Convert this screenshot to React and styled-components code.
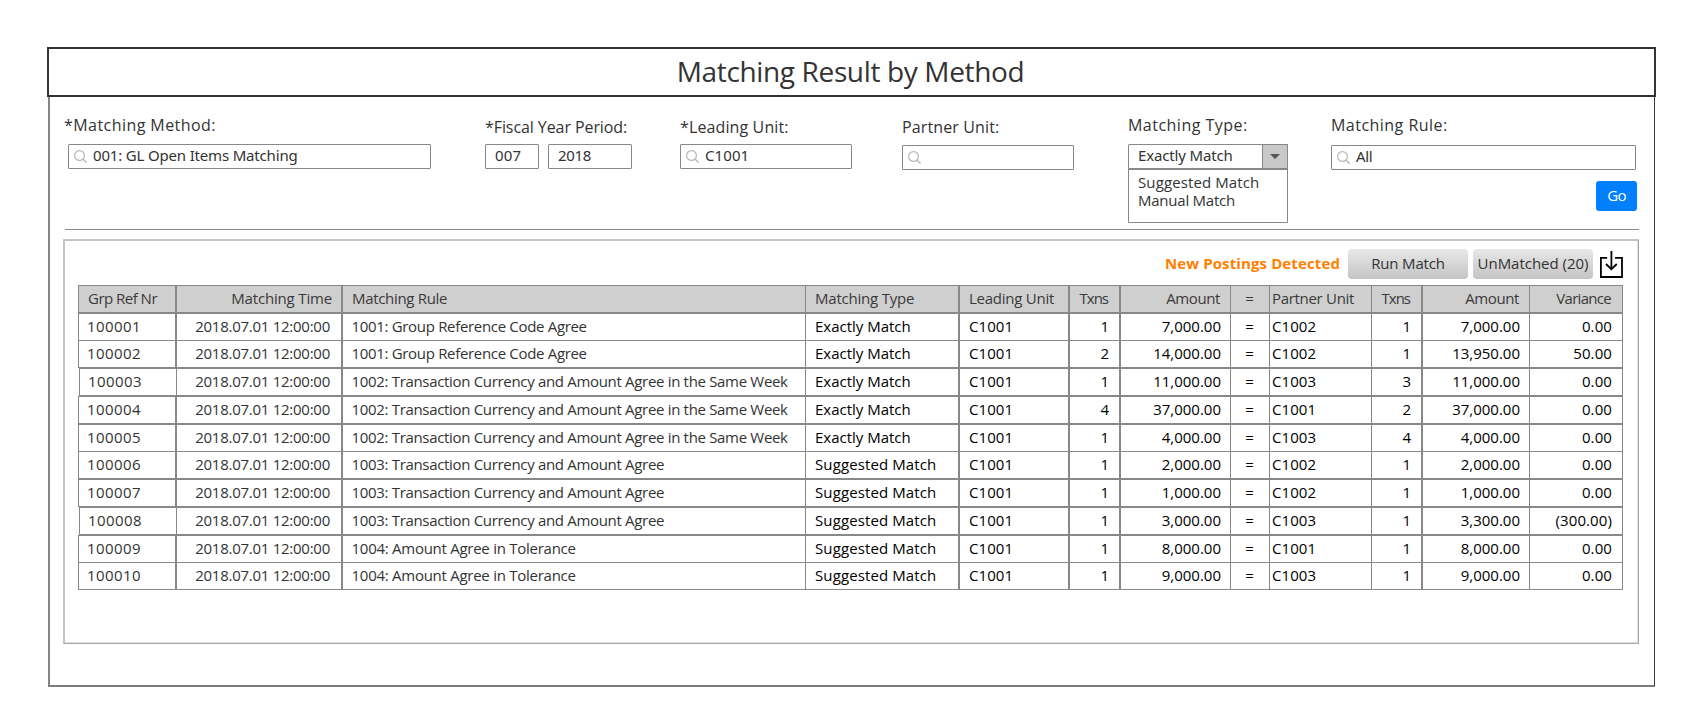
import React from 'react';
import styled, { createGlobalStyle, css } from 'styled-components';

const GlobalStyle = createGlobalStyle`
  * { box-sizing: border-box; }
  body {
    margin: 0;
    background: #fff;
    color: #333;
    font-family: 'Open Sans', 'Noto Sans', sans-serif;
    font-size: 15px;
  }
`;

const Page = styled.main`
  width: 1687px;
  height: 718px;
  padding: 47px 0 0 47px;
  overflow: hidden;
`;

const TitleBar = styled.header`
  display: flex;
  justify-content: center;
  width: 1609px;
  height: 50px;
  padding-right: 2px;
  border: 2px solid #333;
`;

const Title = styled.h1`
  margin: 0;
  font-size: 28px;
  font-weight: 400;
  line-height: 44px;
  letter-spacing: -0.354px;
`;

const Frame = styled.section`
  width: 1607px;
  height: 590px;
  margin-left: 1px;
  padding: 0 16px 0 13px;
  border-left: 2px solid #848484;
  border-right: 1px solid #3c3c3c;
  border-bottom: 2px solid #7c7c7c;
`;

const Filters = styled.form`
  display: grid;
  grid-template-columns: 417px 195px 222px 226px 203px 306px;
  height: 133px;
  margin: 0 -1px 0 2px;
  padding-left: 3px;
  border-bottom: 1px solid #888;
`;

const Field = styled.div`
  display: flex;
  flex-direction: column;
  align-items: flex-start;
  padding-top: ${(p) => (p.$low ? 20 : 18)}px;
`;

const Label = styled.label`
  height: ${(p) => p.$height || 29}px;
  margin-left: ${(p) => p.$shift || 0}px;
  font-size: 16px;
  line-height: 20px;
  white-space: nowrap;
  letter-spacing: ${(p) => p.$spacing}px;
`;

const InputRow = styled.div`
  display: flex;
  gap: 9px;
`;

const InputBox = styled.div`
  display: flex;
  align-items: center;
  width: ${(p) => p.$width}px;
  height: 25px;
  padding-left: ${(p) => (p.$plain ? 9 : 5)}px;
  border: 1px solid #888;
  border-radius: 1px;
  white-space: nowrap;
  letter-spacing: ${(p) => p.$spacing || 0}px;
`;

const Value = styled.span`
  margin-left: ${(p) => (p.$inset ? 6 : 0)}px;
  padding-bottom: 3px;
  font-family: 'Noto Sans', 'Open Sans', sans-serif;
  line-height: 20px;
`;

const SelectArrow = styled.span`
  display: flex;
  align-items: center;
  justify-content: center;
  width: 26px;
  height: 25px;
  margin: 0 -1px 0 auto;
  border: 1px solid #888;
  background: #c8c8c8;
`;

const OptionList = styled.ul`
  width: 160px;
  height: 55px;
  margin: -1px 0 0;
  padding: 3px 0 0 9px;
  border: 1px solid #888;
  border-top: 2px solid #888;
  border-radius: 1px;
  list-style: none;
`;

const Option = styled.li`
  line-height: 18px;
  letter-spacing: ${(p) => p.$spacing}px;
`;

const GoButton = styled.button`
  align-self: flex-end;
  width: 41px;
  height: 30px;
  margin-top: 11px;
  padding: 0 0 3px;
  border: 0;
  border-radius: 3px;
  background: #0080ff;
  color: #fff;
  font: inherit;
  letter-spacing: -0.8px;
`;

const ResultPanel = styled.section`
  width: 1576px;
  height: 405px;
  margin-top: 9px;
  padding: 8px 15px 0 13px;
  border: 2px solid #c4c4c4;
  border-right: 1px solid #a8a8a8;
  border-bottom: 1px solid #a8a8a8;
  border-radius: 1px;
  box-shadow: inset -1px -1px 0 #dedede;
`;

const Toolbar = styled.div`
  display: flex;
  justify-content: flex-end;
  height: 36px;
`;

const Notice = styled.strong`
  margin-right: 8px;
  color: #ff8000;
  font-weight: 700;
  line-height: 28px;
  letter-spacing: 0.117px;
`;

const ToolButton = styled.button`
  width: 120px;
  height: 30px;
  margin-right: ${(p) => p.$gap}px;
  padding: 0 0 2px;
  border: 0;
  border-radius: 4px;
  background: linear-gradient(#e8e8e8, #c4c4c4);
  color: #333;
  font: inherit;
  line-height: 28px;
  white-space: nowrap;
  letter-spacing: ${(p) => p.$spacing}px;
`;

const Table = styled.div`
  width: 1545px;
`;

const Row = styled.div`
  display: flex;
  height: 28px;
  margin-top: ${(p) => (p.$tight ? -1 : 0)}px;
  color: #000;
`;

const Cell = styled.div`
  flex: none;
  width: ${(p) => p.$col.width}px;
  margin-left: ${(p) => (p.$col.overlap ? -1 : 0)}px;
  padding: 0 ${(p) => p.$col.right || 0}px 0 ${(p) => p.$col.left || 0}px;
  border: 1px solid #888;
  line-height: 24px;
  text-align: ${(p) => p.$col.align || 'left'};
  white-space: nowrap;
  letter-spacing: ${(p) => p.$spacing}px;
  ${(p) => p.$col.muted && css`color: #333;`}
  ${(p) => p.$nudged && css`
    position: relative;
    left: 1px;
  `}
  ${(p) => p.$head && css`
    padding-left: ${p.$col.headLeft ?? p.$col.left ?? 0}px;
    padding-right: ${p.$col.headRight ?? p.$col.right ?? 0}px;
    background: #cfcfcf;
    color: #3a3a3a;
  `}
`;

const columns = [
  { title: 'Grp Ref Nr', width: 98, left: 8, headLeft: 9, muted: true, head: -0.514, body: 0.42 },
  { title: 'Matching Time', width: 166, right: 11, headRight: 9, align: 'right', muted: true, head: -0.168, body: -0.259 },
  { title: 'Matching Rule', width: 464, left: 8.5, headLeft: 9, muted: true, head: -0.319, body: -0.32 },
  { title: 'Matching Type', width: 154, overlap: true, left: 9, head: -0.211, body: -0.009 },
  { title: 'Leading Unit', width: 110, left: 9, head: -0.247, body: 0.08 },
  { title: 'Txns', width: 51, right: 10, headRight: 11, align: 'right', head: -1, body: 0 },
  { title: 'Amount', width: 111, right: 9, headRight: 10, align: 'right', head: -0.4, body: 0 },
  { title: '=', width: 40, overlap: true, right: 1, align: 'center', head: 0, body: 0 },
  { title: 'Partner Unit', width: 103, overlap: true, left: 2, head: -0.31, body: 0.08 },
  { title: 'Txns', width: 51, overlap: true, right: 10, headRight: 11, align: 'right', head: -1, body: 0 },
  { title: 'Amount', width: 108, right: 9, headRight: 10, align: 'right', head: -0.4, body: 0 },
  { title: 'Variance', width: 94, overlap: true, right: 10, headRight: 11, align: 'right', head: -0.7, body: 0.1 },
];

const CODE = '1001: Group Reference Code Agree';
const WEEK = '1002: Transaction Currency and Amount Agree in the Same Week';
const CURRENCY = '1003: Transaction Currency and Amount Agree';
const TOLERANCE = '1004: Amount Agree in Tolerance';
const TIME = '2018.07.01 12:00:00';
const EXACT = 'Exactly Match';
const SUGGESTED = 'Suggested Match';

// Tracking for texts that differ from the rest of their column
const tracking = { [SUGGESTED]: 0.108, [TOLERANCE]: -0.264 };

const rows = [
  ['100001', TIME, CODE, EXACT, 'C1001', '1', '7,000.00', '=', 'C1002', '1', '7,000.00', '0.00'],
  ['100002', TIME, CODE, EXACT, 'C1001', '2', '14,000.00', '=', 'C1002', '1', '13,950.00', '50.00'],
  ['100003', TIME, WEEK, EXACT, 'C1001', '1', '11,000.00', '=', 'C1003', '3', '11,000.00', '0.00'],
  ['100004', TIME, WEEK, EXACT, 'C1001', '4', '37,000.00', '=', 'C1001', '2', '37,000.00', '0.00'],
  ['100005', TIME, WEEK, EXACT, 'C1001', '1', '4,000.00', '=', 'C1003', '4', '4,000.00', '0.00'],
  ['100006', TIME, CURRENCY, SUGGESTED, 'C1001', '1', '2,000.00', '=', 'C1002', '1', '2,000.00', '0.00'],
  ['100007', TIME, CURRENCY, SUGGESTED, 'C1001', '1', '1,000.00', '=', 'C1002', '1', '1,000.00', '0.00'],
  ['100008', TIME, CURRENCY, SUGGESTED, 'C1001', '1', '3,000.00', '=', 'C1003', '1', '3,300.00', '(300.00)'],
  ['100009', TIME, TOLERANCE, SUGGESTED, 'C1001', '1', '8,000.00', '=', 'C1001', '1', '8,000.00', '0.00'],
  ['100010', TIME, TOLERANCE, SUGGESTED, 'C1001', '1', '9,000.00', '=', 'C1003', '1', '9,000.00', '0.00'],
];

// Rows that share a single hairline with the row above
const tightRows = ['100002', '100006', '100010'];
const nudgedRows = ['100003', '100008'];

const SearchIcon = () => (
  <svg width="13" height="13" viewBox="0 0 13 13" fill="none" stroke="#b8b8b8" strokeWidth="1.2">
    <circle cx="5.5" cy="5.5" r="4.9" />
    <path d="M9.2 9.2 L12.6 12.6" strokeWidth="1.5" />
  </svg>
);

const CaretIcon = () => (
  <svg width="10" height="5" viewBox="0 0 10 5">
    <path d="M0 0 H10 L5 5 Z" fill="#555" />
  </svg>
);

const DownloadIcon = () => (
  <svg width="24" height="29" viewBox="0 0 24 29" fill="none" stroke="#000" strokeWidth="1.8">
    <path d="M8.2 8.9 H1.9 V28 H23 V8.9 H16" />
    <path d="M12.4 2 V20.2" />
    <path d="M7 15 L12.4 20.2 L17.8 15" />
  </svg>
);

const SearchField = ({ label, spacing, shift, low, labelHeight, width, value, valueSpacing, children }) => (
  <Field $low={low}>
    <Label $spacing={spacing} $shift={shift} $height={labelHeight}>{label}</Label>
    <InputBox $width={width} $spacing={valueSpacing}>
      <SearchIcon />
      <Value $inset>{value}</Value>
    </InputBox>
    {children}
  </Field>
);

export default function App() {
  return (
    <Page>
      <GlobalStyle />
      <TitleBar>
        <Title>Matching Result by Method</Title>
      </TitleBar>
      <Frame>
        <Filters>
          <SearchField label="*Matching Method:" spacing={0.44} shift={-4} width={363} value="001: GL Open Items Matching" valueSpacing={-0.174} />
          <Field $low>
            <Label $height={27} $spacing={-0.08}>*Fiscal Year Period:</Label>
            <InputRow>
              <InputBox $width={54} $plain $spacing={0.2}><Value>007</Value></InputBox>
              <InputBox $width={84} $plain $spacing={-0.35}><Value>2018</Value></InputBox>
            </InputRow>
          </Field>
          <SearchField label="*Leading Unit:" spacing={0.12} low labelHeight={27} width={172} value="C1001" valueSpacing={0.08} />
          <SearchField label="Partner Unit:" spacing={0.128} low labelHeight={28} width={172} value="" />
          <Field>
            <Label $spacing={0.48}>Matching Type:</Label>
            <InputBox $width={160} $plain $spacing={-0.155}>
              <Value>Exactly Match</Value>
              <SelectArrow><CaretIcon /></SelectArrow>
            </InputBox>
            <OptionList>
              <Option $spacing={0.108}>Suggested Match</Option>
              <Option $spacing={-0.236}>Manual Match</Option>
            </OptionList>
          </Field>
          <SearchField label="Matching Rule:" spacing={0.472} labelHeight={30} width={305} value="All" valueSpacing={-0.386}>
            <GoButton type="button">Go</GoButton>
          </SearchField>
        </Filters>
        <ResultPanel>
          <Toolbar>
            <Notice>New Postings Detected</Notice>
            <ToolButton $gap={5} $spacing={-0.176}>Run Match</ToolButton>
            <ToolButton $gap={6} $spacing={-0.02}>UnMatched (20)</ToolButton>
            <DownloadIcon />
          </Toolbar>
          <Table>
            <Row>
              {columns.map((col, i) => (
                <Cell key={i} $col={col} $head $spacing={col.head}>{col.title}</Cell>
              ))}
            </Row>
            {rows.map((cells) => (
              <Row key={cells[0]} $tight={tightRows.includes(cells[0])}>
                {cells.map((text, i) => (
                  <Cell
                    key={i}
                    $col={columns[i]}
                    $spacing={tracking[text] ?? columns[i].body}
                    $nudged={i === 0 && nudgedRows.includes(cells[0])}
                  >
                    {text}
                  </Cell>
                ))}
              </Row>
            ))}
          </Table>
        </ResultPanel>
      </Frame>
    </Page>
  );
}
